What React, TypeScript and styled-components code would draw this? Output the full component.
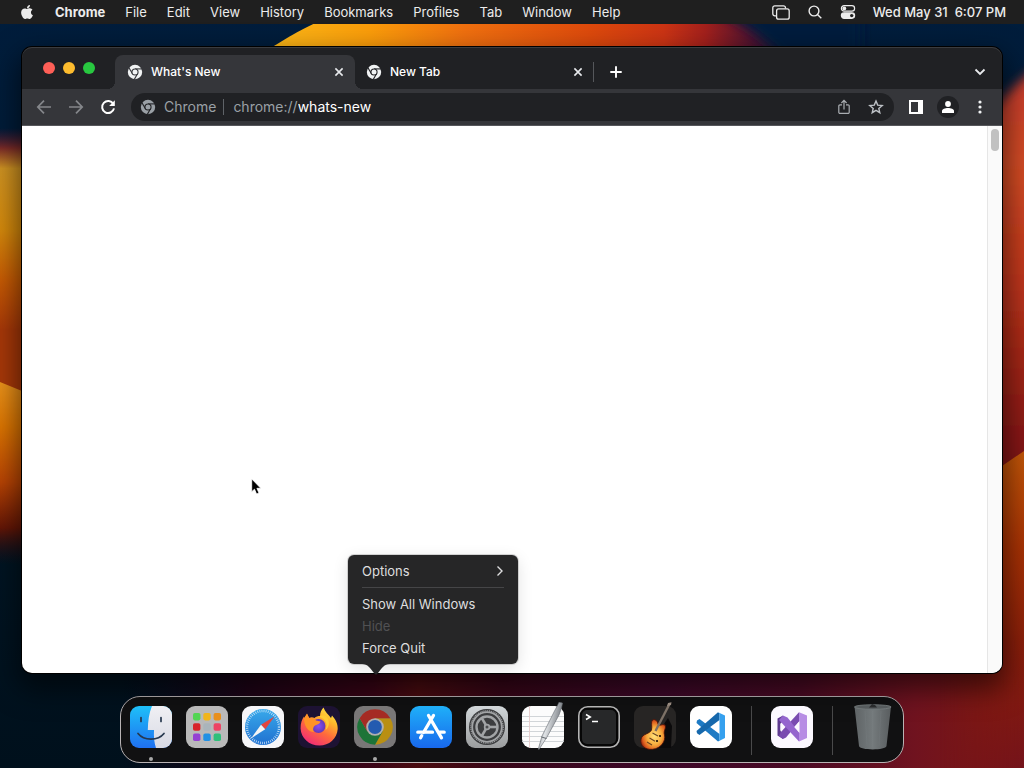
import React from "react";
import styled, { createGlobalStyle, css } from "styled-components";
import { FaApple } from "react-icons/fa";

const GlobalStyle = createGlobalStyle`
  *, *::before, *::after { box-sizing: border-box; }
  body {
    margin: 0;
    background: #00142b;
    color: #fff;
    font-family: Inter, "Liberation Sans", sans-serif;
    font-size: 13px;
  }
  button, input { font: inherit; color: inherit; }
  svg { display: block; flex: none; }
`;

const plainButton = css`
  display: flex;
  align-items: center;
  justify-content: center;
  padding: 0;
  border: 0;
  background: none;
`;

/* ---------- desktop ---------- */

const Desktop = styled.div`
  position: relative;
  isolation: isolate;
  display: flex;
  flex-direction: column;
  min-height: 100vh;
  overflow: hidden;
`;

const WallpaperArt = styled.svg`
  position: absolute;
  inset: 0;
  z-index: -1;
  width: 100%;
  height: 100%;
`;

const Stage = styled.main`
  flex: 1;
  display: flex;
  padding: 23px 22px;
`;

/* ---------- menu bar ---------- */

const MenuBar = styled.header`
  display: flex;
  align-items: center;
  justify-content: space-between;
  height: 24px;
  padding: 0 18px 0 19px;
  background: #1f1f1f;
  color: #ececec;
  font-weight: 500;
  line-height: 16px;
  white-space: nowrap;
`;

const MenuGroup = styled.nav`
  display: flex;
  align-items: center;
  gap: 20px;
`;

const StatusGroup = styled.div`
  display: flex;
  align-items: center;
  gap: 17px;
`;

const MenuButton = styled.button<{ $strong?: boolean }>`
  ${plainButton}
  font-weight: ${(p) => (p.$strong ? 700 : 400)};
`;

const Clock = styled.time`
  white-space: pre;
`;

/* ---------- browser window ---------- */

const BrowserWindow = styled.section`
  position: relative;
  flex: 1;
  display: flex;
  flex-direction: column;
  min-width: 0;
  border-radius: 10px;
  background: #202124;
  box-shadow: 0 0 0 1px #000, 0 12px 28px 4px rgba(0, 0, 0, 0.55);
`;

const TabStrip = styled.div`
  display: flex;
  align-items: flex-end;
  height: 42px;
  padding: 8px 6px 0 21px;
  border-radius: 10px 10px 0 0;
  box-shadow: inset 0 1px #3b3c3f;
`;

const TrafficLights = styled.div`
  display: flex;
  gap: 8px;
  align-self: flex-start;
  width: 72px;
  padding-top: 7px;
`;

const Light = styled.button<{ $color: string }>`
  width: 12px;
  height: 12px;
  padding: 0;
  border: 0;
  border-radius: 50%;
  background: ${(p) => p.$color};
`;

const Tab = styled.div<{ $active?: boolean }>`
  position: relative;
  display: flex;
  align-items: center;
  gap: 8px;
  flex: 0 1 240px;
  height: 34px;
  padding: 0 8px 0 12px;
  border-radius: 8px 8px 0 0;
  background: ${(p) => (p.$active ? "#35363a" : "transparent")};
  font-size: 12px;
  font-weight: 500;

  & + & {
    margin-left: -1px;
  }

  ${(p) =>
    p.$active &&
    css`
      &::before,
      &::after {
        content: "";
        position: absolute;
        bottom: 0;
        width: 8px;
        height: 8px;
      }
      &::before {
        right: 100%;
        background: radial-gradient(circle at 0 0, transparent 8px, #35363a 8px);
      }
      &::after {
        left: 100%;
        background: radial-gradient(circle at 100% 0, transparent 8px, #35363a 8px);
      }
    `}
`;

const TabTitle = styled.button`
  ${plainButton}
  flex: 1;
  justify-content: flex-start;
  height: 34px;
  line-height: 16px;
  white-space: nowrap;
`;

const CloseButton = styled.button`
  ${plainButton}
  width: 16px;
  height: 16px;
`;

const TabDivider = styled.span`
  align-self: center;
  width: 1px;
  height: 20px;
  margin-left: -1px;
  background: #55575b;
`;

const StripButton = styled.button<{ $end?: boolean }>`
  ${plainButton}
  width: 32px;
  height: 34px;
  margin-left: ${(p) => (p.$end ? "auto" : "6px")};
`;

const Toolbar = styled.div`
  display: flex;
  align-items: center;
  height: 37px;
  padding: 0 6px;
  background: #35363a;
  border-bottom: 1px solid #56575b;
`;

const IconButton = styled.button`
  ${plainButton}
  width: 32px;
  height: 28px;
`;

const Avatar = styled.span`
  display: flex;
  align-items: center;
  justify-content: center;
  width: 22px;
  height: 22px;
  border-radius: 50%;
  background: #202124;
`;

const Omnibox = styled.div`
  flex: 1;
  display: flex;
  align-items: center;
  min-width: 0;
  height: 28px;
  margin: 0 6px 0 7px;
  padding: 0 2px 0 9px;
  border-radius: 14px;
  background: #202124;
  font-size: 14px;
  line-height: 16px;
  color: #9aa0a6;
`;

const SiteName = styled.span`
  margin-left: 8px;
  padding-right: 7px;
  border-right: 1px solid #5f6368;
`;

const Scheme = styled.label`
  margin-left: 9px;
`;

const Address = styled.input`
  flex: 1;
  min-width: 0;
  height: 16px;
  padding: 0;
  border: 0;
  outline: 0;
  background: none;
  color: #fff;
`;

const Page = styled.div`
  flex: 1;
  display: flex;
  justify-content: flex-end;
  border-radius: 0 0 10px 10px;
  background: #fff;
  overflow: hidden;
`;

const ScrollTrack = styled.div`
  width: 15px;
  padding: 3px 3px 0;
  border-left: 1px solid #e6e6e6;
  background: #fafafa;
`;

const ScrollThumb = styled.div`
  width: 8px;
  height: 22px;
  border-radius: 4px;
  background: #c1c1c1;
`;

const Pointer = styled.svg`
  position: absolute;
  left: 229px;
  top: 431px;
`;

/* ---------- dock ---------- */

const DockBar = styled.footer`
  align-self: center;
  display: flex;
  gap: 14px;
  height: 67px;
  margin-bottom: 5px;
  padding: 9px;
  padding-bottom: 0;
  border: 1px solid #b9b3b4;
  border-radius: 20px;
  background: #111112;
`;

const DockItem = styled.div`
  position: relative;
  display: flex;
  flex-direction: column;
  align-items: center;
  gap: 9px;
`;

const DockButton = styled.button`
  ${plainButton}
  width: 42px;
  height: 42px;
`;

const RunningDot = styled.span`
  width: 4px;
  height: 4px;
  border-radius: 50%;
  background: #a9a9a9;
`;

const DockDivider = styled.span`
  width: 1px;
  height: 49px;
  margin: 0 5px;
  background: #4a4a4b;
`;

/* ---------- dock context menu ---------- */

const Popover = styled.div`
  position: absolute;
  left: -6px;
  bottom: 98px;
  width: 170px;
  padding: 5px 14px;
  border-radius: 6px;
  background: #262627;
  box-shadow: 0 0 0 1px rgba(0, 0, 0, 0.15), 0 4px 16px rgba(0, 0, 0, 0.12);
`;

const Tail = styled.svg`
  position: absolute;
  left: 14px;
  top: 100%;
`;

const PopoverButton = styled.button`
  ${plainButton}
  justify-content: space-between;
  width: 100%;
  height: 22px;
  line-height: 16px;
  color: #dededf;
  &:disabled {
    color: #515153;
  }
`;

const PopoverRule = styled.hr`
  height: 1px;
  margin: 5px 0;
  border: 0;
  background: #454547;
`;

/* ---------- drawings ---------- */

const Wallpaper = () => (
  <WallpaperArt viewBox="0 0 1024 768" preserveAspectRatio="none" aria-hidden="true">
    <defs>
      <linearGradient id="sky" x1="0" y1="0" x2="0" y2="1">
        <stop offset="0" stopColor="#001d3c" />
        <stop offset="0.5" stopColor="#001a33" />
        <stop offset="0.7" stopColor="#001523" />
        <stop offset="1" stopColor="#00101c" />
      </linearGradient>
      <linearGradient id="crest" gradientUnits="userSpaceOnUse" x1="275" y1="0" x2="800" y2="0">
        <stop offset="0" stopColor="#fbb516" />
        <stop offset="0.18" stopColor="#fb9d0a" />
        <stop offset="0.36" stopColor="#f0700f" />
        <stop offset="0.6" stopColor="#de4a0c" />
        <stop offset="0.74" stopColor="#cc3414" />
        <stop offset="0.82" stopColor="#a3201c" />
        <stop offset="0.91" stopColor="#4d1330" />
        <stop offset="1" stopColor="#4d1330" stopOpacity="0" />
      </linearGradient>
      <linearGradient id="petalLeft" gradientUnits="userSpaceOnUse" x1="0" y1="128" x2="0" y2="330">
        <stop offset="0" stopColor="#5a1530" stopOpacity="0" />
        <stop offset="0.1" stopColor="#7c2c28" />
        <stop offset="0.2" stopColor="#cf9322" />
        <stop offset="0.5" stopColor="#d58a0c" />
        <stop offset="0.75" stopColor="#c85c04" />
        <stop offset="1" stopColor="#a83808" />
      </linearGradient>
      <linearGradient id="petalLow" gradientUnits="userSpaceOnUse" x1="0" y1="380" x2="0" y2="565">
        <stop offset="0" stopColor="#ec951c" />
        <stop offset="0.25" stopColor="#dd7602" />
        <stop offset="0.55" stopColor="#b94404" />
        <stop offset="0.8" stopColor="#641606" />
        <stop offset="1" stopColor="#2a0c12" stopOpacity="0" />
      </linearGradient>
      <linearGradient id="petalRight" gradientUnits="userSpaceOnUse" x1="0" y1="85" x2="0" y2="470">
        <stop offset="0" stopColor="#c73c2c" />
        <stop offset="0.2" stopColor="#d34c25" />
        <stop offset="0.5" stopColor="#bf361b" />
        <stop offset="1" stopColor="#7c1113" />
      </linearGradient>
      <linearGradient id="petalRightLow" gradientUnits="userSpaceOnUse" x1="0" y1="452" x2="0" y2="768">
        <stop offset="0" stopColor="#c25608" />
        <stop offset="0.3" stopColor="#a83204" />
        <stop offset="0.6" stopColor="#8a1f0a" />
        <stop offset="1" stopColor="#74131b" />
      </linearGradient>
      <linearGradient id="floor" gradientUnits="userSpaceOnUse" x1="120" y1="0" x2="1024" y2="0">
        <stop offset="0" stopColor="#12061a" stopOpacity="0" />
        <stop offset="0.14" stopColor="#1e0417" />
        <stop offset="0.28" stopColor="#3a0416" />
        <stop offset="0.33" stopColor="#4a0c10" />
        <stop offset="0.42" stopColor="#380618" />
        <stop offset="0.6" stopColor="#3d0829" />
        <stop offset="0.75" stopColor="#4a0a24" />
        <stop offset="0.88" stopColor="#70131f" />
        <stop offset="1" stopColor="#80180f" />
      </linearGradient>
      <linearGradient id="edgeFade" x1="0" y1="0" x2="1" y2="0">
        <stop offset="0" stopColor="#000" />
        <stop offset="1" stopColor="#fff" />
      </linearGradient>
      <mask id="edgeMask" maskUnits="userSpaceOnUse" x="940" y="440" width="84" height="328">
        <rect x="940" y="440" width="84" height="328" fill="url(#edgeFade)" />
        <rect x="1000" y="440" width="24" height="200" fill="#fff" />
      </mask>
      <filter id="soft" x="-20%" y="-20%" width="140%" height="140%">
        <feGaussianBlur stdDeviation="6" />
      </filter>
    </defs>
    <rect width="1024" height="768" fill="url(#sky)" />
    <path d="M262 54 C288 36 308 26 330 16 H820 V66 H262Z" fill="url(#crest)" />
    <path d="M690 0 C730 16 760 30 790 66 L860 66 L860 0Z" fill="#001d3c" filter="url(#soft)" />
    <rect y="120" width="120" height="290" fill="url(#petalLeft)" />
    <path d="M0 382 L22 391 L120 430 L120 566 L0 566Z" fill="url(#petalLow)" />
    <path d="M1040 66 C1010 86 990 110 974 150 L974 480 L1040 480Z" fill="url(#petalRight)" filter="url(#soft)" />
    <rect y="620" x="120" width="904" height="148" fill="url(#floor)" />
    <path d="M940 499 L1002 466 L1024 451 L1024 768 L940 768Z" fill="url(#petalRightLow)" mask="url(#edgeMask)" />
  </WallpaperArt>
);

const ChromeMark = ({ color, slit }: { color: string; slit: string }) => (
  <svg width="16" height="16" viewBox="0 0 16 16" aria-hidden="true">
    <circle cx="8" cy="8" r="7.2" fill={color} />
    <circle cx="8" cy="8" r="3.6" fill={slit} />
    <g stroke={slit} strokeWidth="1.1">
      <path d="M8 4.9H15" />
      <path d="M8 4.9H15" transform="rotate(120 8 8)" />
      <path d="M8 4.9H15" transform="rotate(240 8 8)" />
    </g>
    <circle cx="8" cy="8" r="2.5" fill={color} />
  </svg>
);

const Cross = () => (
  <svg width="10" height="10" viewBox="0 0 10 10" stroke="#e8eaed" strokeWidth="1.6">
    <path d="M1.4 1.4L8.6 8.6M8.6 1.4L1.4 8.6" />
  </svg>
);

const Back = ({ flip }: { flip?: boolean }) => (
  <svg width="16" height="16" viewBox="0 0 16 16" fill="none" stroke="#85878b" strokeWidth="1.7">
    <path d="M8 1.6L1.8 8L8 14.4M1.8 8H15" transform={flip ? "rotate(180 8 8)" : undefined} />
  </svg>
);

const Reload = () => (
  <svg width="16" height="16" viewBox="0 0 16 16" fill="none" stroke="#fff" strokeWidth="2">
    <path d="M13.3 5A6 6 0 1 0 14 9.4" />
    <path d="M14.8 1.2V6.9H9.1Z" fill="#fff" stroke="none" />
  </svg>
);

const Finder = () => (
  <svg width="42" height="42" viewBox="0 0 42 42">
    <defs>
      <linearGradient id="fBlue" x1="0" y1="0" x2="0" y2="1">
        <stop stopColor="#1ec0f8" />
        <stop offset="1" stopColor="#1f70f0" />
      </linearGradient>
      <linearGradient id="fGrey" x1="0" y1="0" x2="0" y2="1">
        <stop stopColor="#f0f0f4" />
        <stop offset="1" stopColor="#d8dae4" />
      </linearGradient>
      <clipPath id="fClip"><rect width="42" height="42" rx="9" /></clipPath>
    </defs>
    <g clipPath="url(#fClip)">
      <rect width="42" height="42" fill="url(#fBlue)" />
      <path d="M22 0C19 7 18 15 17.8 24H24C23.6 31 24.3 37 26 42H42V0Z" fill="url(#fGrey)" />
    </g>
    <path d="M11 11.5V15.5M31 11.5V15.5" stroke="#26384e" strokeWidth="1.7" strokeLinecap="round" />
    <path d="M8 27.5C14 35 28 35 34 27.5" fill="none" stroke="#26384e" strokeWidth="1.7" strokeLinecap="round" />
  </svg>
);

const padColors = ["#52d552", "#f1b51d", "#e8901c", "#d8242b", "#aab4bb", "#ee4464", "#9540d3", "#2291e4", "#2fc07a"];
const Launchpad = () => (
  <svg width="42" height="42" viewBox="0 0 42 42">
    <rect width="42" height="42" rx="9" fill="#b9b9b9" />
    {padColors.map((c, i) => (
      <rect key={c} x={7 + (i % 3) * 10.3} y={7 + Math.floor(i / 3) * 10.3} width="7.4" height="7.4" rx="1.8" fill={c} />
    ))}
  </svg>
);

const Safari = () => (
  <svg width="42" height="42" viewBox="0 0 42 42">
    <defs>
      <linearGradient id="sBlue" x1="0" y1="0" x2="0" y2="1">
        <stop stopColor="#38a9ea" />
        <stop offset="1" stopColor="#2070d0" />
      </linearGradient>
    </defs>
    <rect width="42" height="42" rx="9" fill="#f6f6f8" />
    <circle cx="21" cy="21" r="18" fill="url(#sBlue)" />
    <circle cx="21" cy="21" r="16" fill="none" stroke="#d9ecfb" strokeWidth="2.4" strokeDasharray="0.7 1.4" />
    <path d="M32.5 10.500L19 18.700L23.200 23.200Z" fill="#e2453f" />
    <path d="M9 32.500L19 18.700L23.200 23.200Z" fill="#f4f4f4" />
  </svg>
);

const Firefox = () => (
  <svg width="42" height="42" viewBox="0 0 42 42">
    <defs>
      <linearGradient id="ffBody" x1="0.85" y1="0" x2="0.25" y2="1">
        <stop stopColor="#fff04a" />
        <stop offset="0.3" stopColor="#ffb52c" />
        <stop offset="0.6" stopColor="#ff6a3c" />
        <stop offset="1" stopColor="#f0287a" />
      </linearGradient>
      <radialGradient id="ffOrb">
        <stop stopColor="#8a50f4" />
        <stop offset="1" stopColor="#6338b8" />
      </radialGradient>
    </defs>
    <rect width="42" height="42" rx="9" fill="#1d1233" />
    <path d="M25.5 1.5C27 6 30.5 8.500 33 12L34 9.500C37.500 13 40 18 39.700 23C39 33 31 39.500 21.500 39.500C11 39.500 3 32 2.600 22.500C2.500 17 4 13.500 6 10.500L6.500 13L9 8L11 12C13 11 15 11.300 16.500 12C18 10.500 20 10 22 10C22 6.500 23.500 3.500 25.500 1.500Z" fill="url(#ffBody)" />
    <circle cx="20.500" cy="20" r="6.900" fill="url(#ffOrb)" />
    <path d="M6 12L9 7.500L11.500 12.500C13.500 11.500 16 12 18 14.500L22.500 15.500C22 18 19.500 18.500 17 19.500C15 21 14.500 23.500 16 26C10 26 6 20 6 12Z" fill="#ff9326" />
    <path d="M22 11C27.500 13 30 18 27.500 24C32 21 32 14 28 10C26 9 24 9 22 10Z" fill="#ffcb35" />
  </svg>
);

const Chrome = () => (
  <svg width="42" height="42" viewBox="0 0 42 42">
    <rect width="42" height="42" rx="9" fill="#797777" />
    <path d="M36.330 12.150A17.700 17.700 0 0 1 21 38.700L28.300 25.200L21 12.150Z" fill="#b98f12" />
    <path d="M21 38.700A17.700 17.700 0 0 1 5.670 12.150L13.340 25.430L28.660 25.430Z" fill="#1d7438" />
    <path d="M5.670 12.150A17.700 17.700 0 0 1 36.330 12.150H21L13.340 25.430Z" fill="#a52b23" />
    <circle cx="21" cy="21" r="8.800" fill="#b2b0ae" />
    <circle cx="21" cy="21" r="6.900" fill="#245bb0" />
  </svg>
);

const AppStore = () => (
  <svg width="42" height="42" viewBox="0 0 42 42">
    <defs>
      <linearGradient id="asBlue" x1="0" y1="0" x2="0" y2="1">
        <stop stopColor="#1fb0f9" />
        <stop offset="1" stopColor="#1868ec" />
      </linearGradient>
    </defs>
    <rect width="42" height="42" rx="9" fill="url(#asBlue)" />
    <g stroke="#fff" strokeWidth="3.300" strokeLinecap="round" fill="none">
      <path d="M23.500 9.500L13.500 26.500M18.500 9.500L31.500 31.800M7.800 26.200H22.500M28.300 26.200H34.200M11.700 29.800L10.600 31.800" />
    </g>
  </svg>
);

const Settings = () => (
  <svg width="42" height="42" viewBox="0 0 42 42">
    <defs>
      <linearGradient id="stGrey" x1="0" y1="0" x2="0" y2="1">
        <stop stopColor="#d2d7da" />
        <stop offset="1" stopColor="#9b9d9e" />
      </linearGradient>
    </defs>
    <rect width="42" height="42" rx="9" fill="url(#stGrey)" />
    <circle cx="21" cy="21" r="18" fill="#3c3d3f" />
    <g fill="none" stroke="#a2a4a6">
      <circle cx="21" cy="21" r="14.800" strokeWidth="1.800" />
      <circle cx="21" cy="21" r="16.200" strokeWidth="1.200" strokeDasharray="1 0.900" />
      <circle cx="21" cy="21" r="10.500" strokeWidth="2.400" />
      <g strokeWidth="2.600">
        <path d="M21 21H31" />
        <path d="M21 21H31" transform="rotate(120 21 21)" />
        <path d="M21 21H31" transform="rotate(240 21 21)" />
      </g>
    </g>
    <circle cx="21" cy="21" r="3.200" fill="#a2a4a6" />
    <circle cx="21" cy="21" r="1.500" fill="#4c4d4f" />
  </svg>
);

const TextEdit = () => (
  <svg width="42" height="50" viewBox="0 -4 42 50">
    <defs>
      <linearGradient id="pen" x1="0" y1="0" x2="1" y2="0.350">
        <stop stopColor="#70757b" />
        <stop offset="0.450" stopColor="#e0e3e6" />
        <stop offset="1" stopColor="#6b7076" />
      </linearGradient>
    </defs>
    <rect width="42" height="42" rx="9" fill="#fcfcfc" />
    <path d="M0 10.500H42M0 15.500H42M0 20.500H42M0 25.500H42M0 30.500H42M0 35.500H42" stroke="#ccd0d4" strokeWidth="0.900" />
    <path d="M7.500 0V42" stroke="#e3c9c9" strokeWidth="0.900" />
    <path d="M37 -3.800L40.500 -3L39.500 2L37 9L25 31L17 43.500L16.300 43L20 30L32.500 5L35.500 -0.500Z" fill="url(#pen)" stroke="#63686e" strokeWidth="0.600" />
    <path d="M19.500 31L24.500 32.500" stroke="#555a60" strokeWidth="0.900" />
  </svg>
);

const Terminal = () => (
  <svg width="42" height="42" viewBox="0 0 42 42">
    <rect x="0.800" y="0.800" width="40.400" height="40.400" rx="9" fill="#060606" stroke="#b4b4b4" strokeWidth="1.600" />
    <rect x="4" y="4" width="34" height="34" rx="5" fill="#272829" />
    <path d="M8 8.500L12.300 11L8 13.500M14 15.600H20" fill="none" stroke="#fff" strokeWidth="1.500" />
  </svg>
);

const GarageBand = () => (
  <svg width="42" height="50" viewBox="0 -4 42 50">
    <defs>
      <radialGradient id="burst" cx="0.550" cy="0.550" r="0.600">
        <stop stopColor="#ffe27a" />
        <stop offset="0.500" stopColor="#f7ab3c" />
        <stop offset="0.800" stopColor="#dd5c1e" />
        <stop offset="1" stopColor="#8a200f" />
      </radialGradient>
    </defs>
    <rect width="42" height="42" rx="9" fill="#272524" />
    <path d="M26 24L34 12L38 20L37 42H22Z" fill="#0b0a0b" />
    <path d="M18.500 14C21 12.500 23.500 15 24 18C25 21 28.500 17.500 31 19C33 21.500 29 24.500 30.500 29C32 35 27 42.500 18.500 43.300C11 44 5.500 39.500 7 33C8.500 27.500 16 28 17.500 24C18.500 20.500 16.500 16 18.500 14Z" fill="url(#burst)" stroke="#451108" strokeWidth="0.800" />
    <path d="M35.500 -2L21.500 25" stroke="#7d7166" strokeWidth="2.400" />
    <path d="M33 0L34 -3L37.500 -3.800L37 -1Z" fill="#998b80" />
    <path d="M18.500 27L24 30M15.500 32L21 35.300M13 36L18 39" stroke="#6b4423" strokeWidth="1.100" />
    <circle cx="26" cy="30" r="1.100" fill="#1c0d06" />
    <circle cx="23" cy="35" r="1.100" fill="#1c0d06" />
  </svg>
);

const Code = () => (
  <svg width="42" height="42" viewBox="0 0 42 42">
    <rect width="42" height="42" rx="9" fill="#fff" />
    <path d="M7 14.500L9.500 12.900L29.500 28V34.500L28 35.500L6.500 17Z" fill="#1d7ac4" />
    <path d="M7 27.300L9.500 29L29.500 14V7.500L28 6.300L6.500 25Z" fill="#1668ac" />
    <path d="M28 6.200L35 9.500V32L28 35.500C29 35 29.500 34 29.500 33V9C29.500 7.500 29 6.700 28 6.200Z" fill="#35a0ee" />
  </svg>
);

const Studio = () => (
  <svg width="42" height="42" viewBox="0 0 42 42">
    <rect width="42" height="42" rx="9" fill="#fcf9ff" />
    <path d="M6.500 12.500L12 9.500V15L9.500 17.500V25L12 27.500V33L6.500 29.500Z" fill="#5f3a90" />
    <path d="M9.500 26.500L28 6.300L29.500 14L15 31.500L12 33L8 30Z" fill="#7a4bb0" />
    <path d="M12 9.500L16.500 11.500L29.500 28L28 35.500L8 14Z" fill="#9565ce" />
    <path d="M28 6.200L36 9.500V32L28 35.500Z" fill="#b78ce4" />
    <path d="M28.500 15L23.200 21L28.500 27Z" fill="#fcf9ff" />
    <path d="M9.500 17.500L13 21L9.500 24.500Z" fill="#fcf9ff" />
  </svg>
);

const Trash = () => (
  <svg width="42" height="50" viewBox="0 -4 42 50">
    <defs>
      <linearGradient id="bin" x1="0" y1="0" x2="1" y2="0">
        <stop stopColor="#5f6466" />
        <stop offset="0.500" stopColor="#747a7c" />
        <stop offset="1" stopColor="#595d5f" />
      </linearGradient>
    </defs>
    <path d="M2.500 0.500L7 40C7.500 44.500 34 44.500 34.500 40L39 0.500Z" fill="url(#bin)" />
    <ellipse cx="20.800" cy="1" rx="18.300" ry="2.300" fill="#565b5d" stroke="#777d7f" strokeWidth="0.800" />
    <path d="M17 1.500L20 -2L23 -1L25 1.500Z" fill="#292b2c" />
    <path d="M13 5L15 40M20.800 5V41M29 5L27 40" stroke="#81878a" strokeWidth="0.500" opacity="0.400" />
  </svg>
);

/* ---------- data ---------- */

const menus = ["File", "Edit", "View", "History", "Bookmarks", "Profiles", "Tab", "Window", "Help"];

const pinned: { name: string; icon: React.ReactNode; running?: boolean; menu?: boolean }[] = [
  { name: "Finder", icon: <Finder />, running: true },
  { name: "Launchpad", icon: <Launchpad /> },
  { name: "Safari", icon: <Safari /> },
  { name: "Firefox", icon: <Firefox /> },
  { name: "Chrome", icon: <Chrome />, running: true, menu: true },
  { name: "App Store", icon: <AppStore /> },
  { name: "System Settings", icon: <Settings /> },
  { name: "TextEdit", icon: <TextEdit /> },
  { name: "Terminal", icon: <Terminal /> },
  { name: "GarageBand", icon: <GarageBand /> },
  { name: "Visual Studio Code", icon: <Code /> },
];

const DockMenu = () => (
  <Popover role="menu">
    <PopoverButton role="menuitem">
      Options
      <svg width="8" height="12" viewBox="0 0 8 12" fill="none" stroke="#dededf" strokeWidth="1.400">
        <path d="M1.500 1.500L6 6L1.500 10.500" />
      </svg>
    </PopoverButton>
    <PopoverRule />
    <PopoverButton role="menuitem">Show All Windows</PopoverButton>
    <PopoverButton role="menuitem" disabled>Hide</PopoverButton>
    <PopoverButton role="menuitem">Force Quit</PopoverButton>
    <Tail width="28" height="12" viewBox="0 0 28 12" aria-hidden="true">
      <path d="M0 0H28C22 0 20 4 16 9Q14 12 12 9C8 4 6 0 0 0Z" fill="#262627" />
    </Tail>
  </Popover>
);

export default function App() {
  return (
    <Desktop>
      <GlobalStyle />
      <Wallpaper />

      <MenuBar>
        <MenuGroup aria-label="Application menu">
          <MenuButton aria-label="Apple menu"><FaApple size={16} /></MenuButton>
          <MenuButton $strong>Chrome</MenuButton>
          {menus.map((m) => (
            <MenuButton key={m}>{m}</MenuButton>
          ))}
        </MenuGroup>
        <StatusGroup>
          <MenuButton aria-label="Windows">
            <svg width="18" height="15" viewBox="0 0 18 15" fill="none" stroke="#ececec" strokeWidth="1.300">
              <path d="M4.500 10.800H2.800A2 2 0 0 1 0.800 8.800V2.800A2 2 0 0 1 2.800 0.800H11.500A2 2 0 0 1 13.500 2.800V3.500" />
              <rect x="4.600" y="3.900" width="12.600" height="10.300" rx="2" />
            </svg>
          </MenuButton>
          <MenuButton aria-label="Search">
            <svg width="16" height="14" viewBox="0 0 16 14" fill="none" stroke="#ececec" strokeWidth="1.400">
              <circle cx="7" cy="6" r="4.900" />
              <path d="M10.500 9.500L14.300 13.300" />
            </svg>
          </MenuButton>
          <MenuButton aria-label="Control Center">
            <svg width="16" height="14" viewBox="0 0 16 14" fill="none" stroke="#ececec" strokeWidth="1.200">
              <rect x="1.400" y="0.700" width="13.200" height="5.400" rx="2.700" />
              <circle cx="4.300" cy="3.400" r="1.900" fill="#ececec" stroke="none" />
              <rect x="1.400" y="7.900" width="13.200" height="5.400" rx="2.700" fill="#ececec" />
              <circle cx="11.700" cy="10.600" r="1.700" fill="#1f1f1f" stroke="none" />
            </svg>
          </MenuButton>
          <Clock>Wed May 31  6:07 PM</Clock>
        </StatusGroup>
      </MenuBar>

      <Stage>
        <BrowserWindow aria-label="Chrome">
          <TabStrip>
            <TrafficLights>
              <Light $color="#fe5f57" aria-label="Close" />
              <Light $color="#fdbc2e" aria-label="Minimize" />
              <Light $color="#28c840" aria-label="Zoom" />
            </TrafficLights>
            <Tab $active>
              <ChromeMark color="#f1f3f4" slit="#35363a" />
              <TabTitle>What's New</TabTitle>
              <CloseButton aria-label="Close What's New"><Cross /></CloseButton>
            </Tab>
            <Tab>
              <ChromeMark color="#f1f3f4" slit="#202124" />
              <TabTitle>New Tab</TabTitle>
              <CloseButton aria-label="Close New Tab"><Cross /></CloseButton>
            </Tab>
            <TabDivider />
            <StripButton aria-label="New tab">
              <svg width="12" height="12" viewBox="0 0 12 12" stroke="#fff" strokeWidth="1.900">
                <path d="M6 0.300V11.700M0.300 6H11.700" />
              </svg>
            </StripButton>
            <StripButton $end aria-label="Search tabs">
              <svg width="12" height="8" viewBox="0 0 12 8" fill="none" stroke="#e8eaed" strokeWidth="1.800">
                <path d="M1.500 1.500L6 6L10.500 1.500" />
              </svg>
            </StripButton>
          </TabStrip>

          <Toolbar>
            <IconButton aria-label="Back"><Back /></IconButton>
            <IconButton aria-label="Forward"><Back flip /></IconButton>
            <IconButton aria-label="Reload"><Reload /></IconButton>
            <Omnibox>
              <ChromeMark color="#9aa0a6" slit="#202124" />
              <SiteName>Chrome</SiteName>
              <Scheme htmlFor="address">chrome://</Scheme>
              <Address id="address" defaultValue="whats-new" />
              <IconButton aria-label="Share">
                <svg width="12" height="16" viewBox="0 0 12 16" fill="none" stroke="#a9adb1" strokeWidth="1.200">
                  <path d="M4 5.800H2A1.200 1.200 0 0 0 0.800 7V13.200A1.200 1.200 0 0 0 2 14.400H10A1.200 1.200 0 0 0 11.200 13.200V7A1.200 1.200 0 0 0 10 5.800H8M6 10.500V1.500M3.400 4L6 1.400L8.600 4" />
                </svg>
              </IconButton>
              <IconButton aria-label="Bookmark this tab">
                <svg width="16" height="16" viewBox="0 0 16 16" fill="none" stroke="#bdc1c6" strokeWidth="1.400">
                  <path d="M8 2L9.700 6.100L14.200 6.500L10.800 9.400L11.800 13.700L8 11.400L4.200 13.700L5.200 9.400L1.800 6.500L6.300 6.100Z" />
                </svg>
              </IconButton>
            </Omnibox>
            <IconButton aria-label="Side panel">
              <svg width="14" height="14" viewBox="0 0 14 14">
                <path fillRule="evenodd" d="M0 0H14V14H0ZM2 2V12H9V2Z" fill="#fff" />
              </svg>
            </IconButton>
            <IconButton aria-label="Profile">
              <Avatar>
                <svg width="12" height="12" viewBox="0 0 12 12" fill="#fff">
                  <circle cx="6" cy="3" r="2.900" />
                  <path d="M0 12V10C0 8 3 7 6 7S12 8 12 10V12Z" />
                </svg>
              </Avatar>
            </IconButton>
            <IconButton aria-label="Menu">
              <svg width="4" height="14" viewBox="0 0 4 14" fill="#f1f3f4">
                <circle cx="2" cy="2" r="1.600" />
                <circle cx="2" cy="7" r="1.600" />
                <circle cx="2" cy="12" r="1.600" />
              </svg>
            </IconButton>
          </Toolbar>

          <Page>
            <ScrollTrack><ScrollThumb /></ScrollTrack>
          </Page>
          <Pointer width="12" height="18" viewBox="0 0 12 18" aria-hidden="true">
            <path d="M0.700 0.900V13.700L3.500 11.200L5.600 16.100L8 15L5.900 10.300H9.800Z" fill="#000" stroke="#fff" strokeWidth="0.800" />
          </Pointer>
        </BrowserWindow>
      </Stage>

      <DockBar>
        {pinned.map((app) => (
          <DockItem key={app.name}>
            <DockButton aria-label={app.name}>{app.icon}</DockButton>
            {app.running && <RunningDot />}
            {app.menu && <DockMenu />}
          </DockItem>
        ))}
        <DockDivider />
        <DockItem><DockButton aria-label="Visual Studio"><Studio /></DockButton></DockItem>
        <DockDivider />
        <DockItem><DockButton aria-label="Trash"><Trash /></DockButton></DockItem>
      </DockBar>
    </Desktop>
  );
}
